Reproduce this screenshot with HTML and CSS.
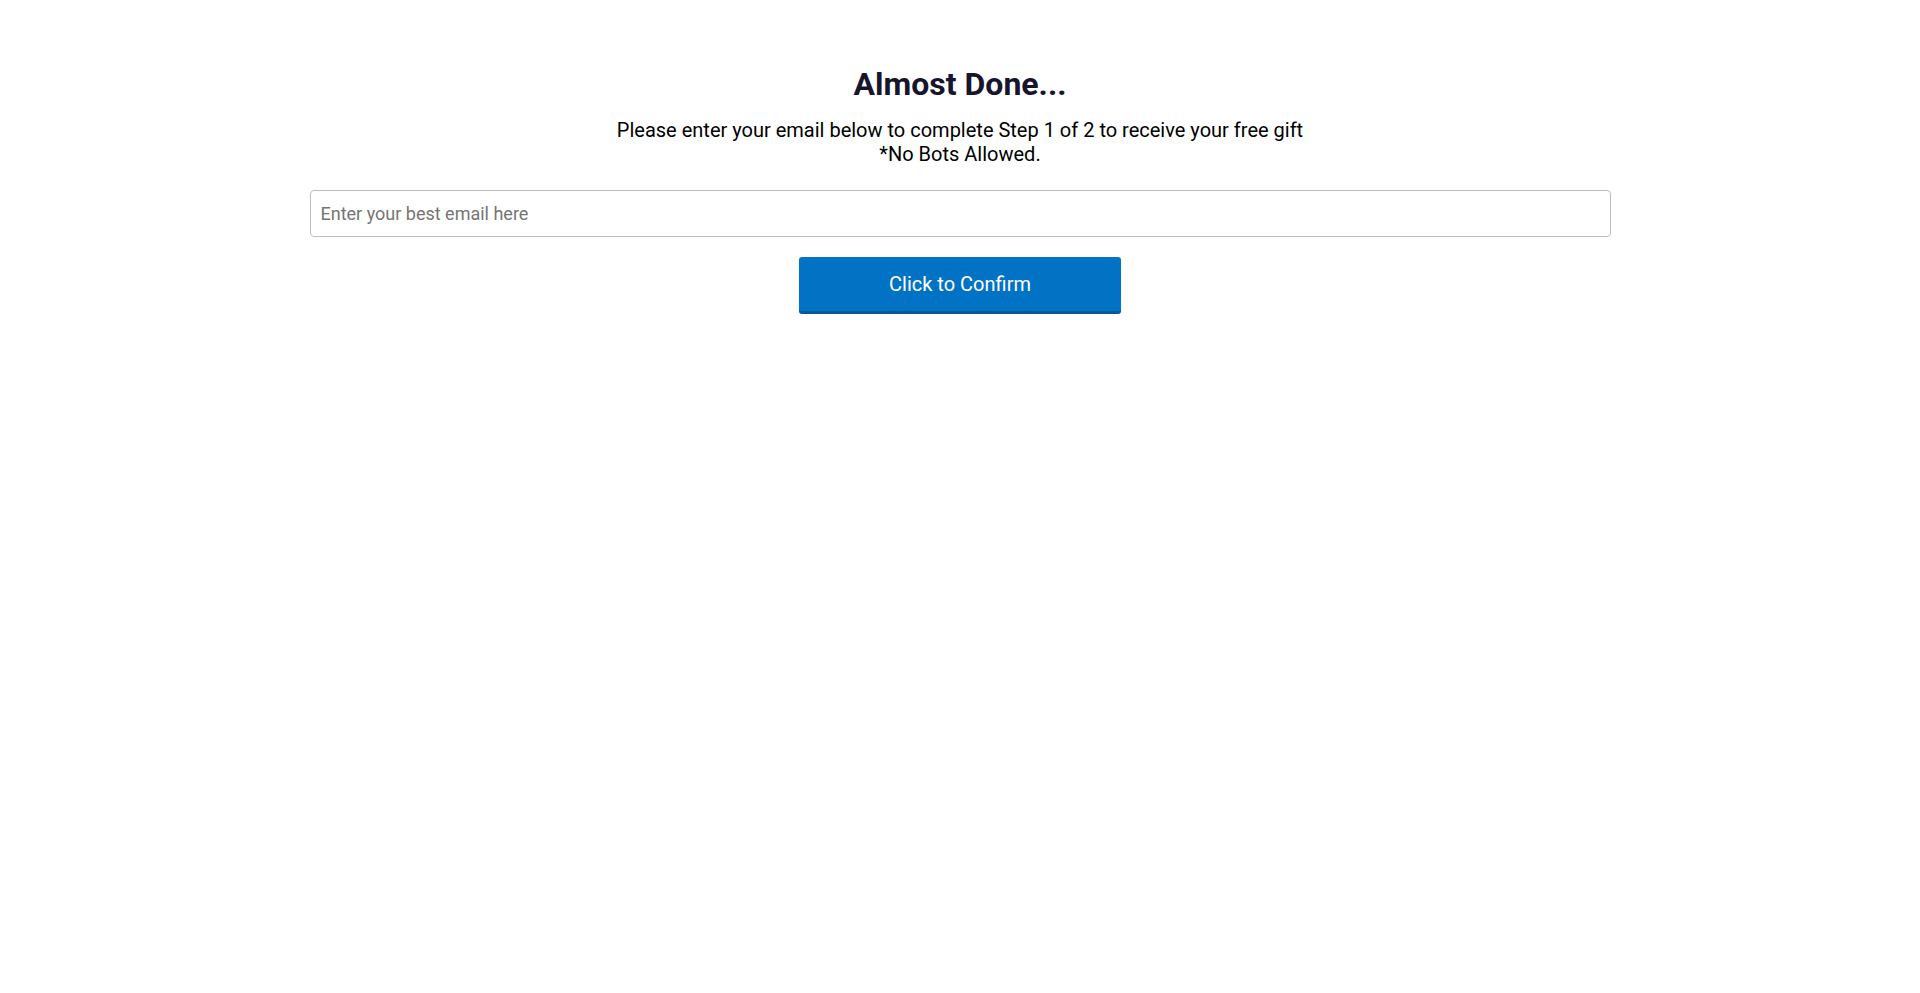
FILE: index.html
```html
<!DOCTYPE html>
<html lang="en">
<head>
<meta charset="utf-8">
<title>Almost Done...</title>
<link rel="stylesheet" href="styles.css">
</head>
<body>
<main class="wrap">
  <h1 class="title">Almost Done...</h1>
  <p class="sub">Please enter your email below to complete Step 1 of 2 to receive your free gift<br>*No Bots Allowed.</p>
  <form class="form">
    <input class="email" type="email" placeholder="Enter your best email here">
    <button class="btn" type="button">Click to Confirm</button>
  </form>
</main>
</body>
</html>
```
FILE: styles.css
```css
html, body {
  margin: 0;
  padding: 0;
  background: #ffffff;
}
body {
  font-family: Roboto, "Liberation Sans", Arial, sans-serif;
  color: #000;
}
.wrap {
  width: 1301px;
  margin: 0 auto;
  padding-top: 65px;
  text-align: center;
}
.title {
  margin: 0;
  font-size: 32px;
  line-height: 38px;
  font-weight: 700;
  color: #17152e;
}
.sub {
  margin: 15px 0 0;
  font-size: 20px;
  line-height: 24px;
  color: #000;
}
.form {
  margin-top: 24px;
  display: flex;
  flex-direction: column;
  align-items: center;
  gap: 20px;
}
.email {
  box-sizing: border-box;
  width: 100%;
  height: 47px;
  padding: 0 10px;
  border: 1px solid #bdbdbd;
  border-radius: 4px;
  font-family: Roboto, "Liberation Sans", Arial, sans-serif;
  font-size: 18px;
  color: #333;
  outline: none;
  background: #fff;
}
.email::placeholder {
  color: #757575;
}
.btn {
  box-sizing: border-box;
  width: 322px;
  height: 57px;
  border: 0;
  border-bottom: 3px solid #005a9a;
  border-radius: 3px;
  background: #0273c4;
  color: #fff;
  font-family: Roboto, "Liberation Sans", Arial, sans-serif;
  font-size: 20px;
  padding: 0;
  cursor: pointer;
}
```
